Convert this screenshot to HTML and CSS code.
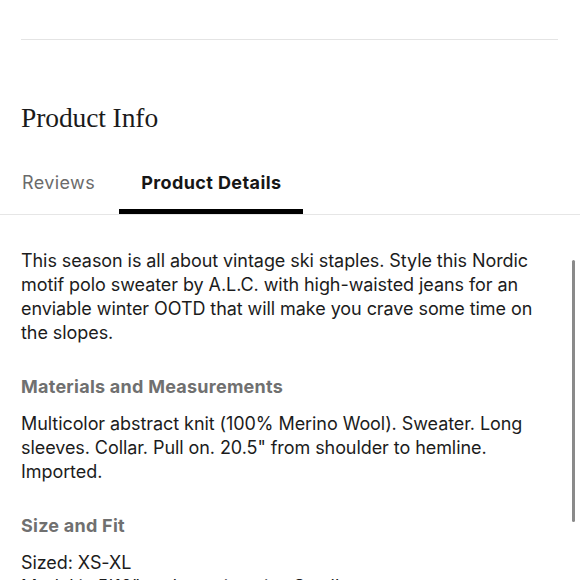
FILE: index.html
```html
<!DOCTYPE html>
<html lang="en">
<head>
<meta charset="utf-8">
<title>Product Info</title>
<link rel="stylesheet" href="styles.css">
</head>
<body>
<div class="page">
  <div class="top">
    <hr class="divider">
    <h1 class="title">Product Info</h1>
  </div>
  <nav class="tabs">
    <span class="tab">Reviews</span>
    <span class="tab active">Product Details</span>
  </nav>
  <section class="content">
    <p class="para">This season is all about vintage ski staples. Style this Nordic motif polo sweater by A.L.C. with high-waisted jeans for an enviable winter OOTD that will make you crave some time on the slopes.</p>
    <h2 class="subhead">Materials and Measurements</h2>
    <p class="para">Multicolor abstract knit (100% Merino Wool). Sweater. Long sleeves. Collar. Pull on. 20.5" from shoulder to hemline. Imported.</p>
    <h2 class="subhead">Size and Fit</h2>
    <p class="para">Sized: XS-XL<br>Model is 5'10" and wearing size Small.</p>
  </section>
  <div class="scrollbar"></div>
</div>
</body>
</html>
```

FILE: styles.css
```css
* { box-sizing: border-box; }

html, body {
  margin: 0;
  padding: 0;
  background: #ffffff;
}

body {
  font-family: Inter, "Noto Sans", "Liberation Sans", sans-serif;
  color: #1c1c1c;
  overflow: hidden;
}

.page {
  position: relative;
  width: 580px;
  height: 580px;
  overflow: hidden;
}

.top {
  padding: 39px 22px 0 21px;
}

.divider {
  margin: 0;
  border: 0;
  border-top: 1px solid #e4e4e4;
}

.title {
  margin: 62px 0 0 0;
  font-family: "Liberation Serif", "DejaVu Serif", serif;
  font-weight: 400;
  font-size: 27.5px;
  line-height: 31px;
  color: #1a1a1a;
  letter-spacing: -0.1px;
}

.tabs {
  display: flex;
  margin-top: 38px;
  border-bottom: 1px solid #e6e6e6;
}

.tab {
  padding: 0 22px 14px 22px;
  font-size: 18px;
  line-height: 24px;
  letter-spacing: 0.4px;
  color: #6b6b6b;
  border-bottom: 5px solid transparent;
}

.tab.active {
  margin-left: 2px;
  color: #161616;
  font-weight: 700;
  border-bottom-color: #000000;
}

.content {
  padding: 34px 30px 0 21px;
}

.para {
  margin: 0;
  font-size: 18px;
  line-height: 24px;
  letter-spacing: -0.07px;
  color: #1c1c1c;
}

.subhead {
  margin: 30px 0 13px 0;
  font-size: 18px;
  line-height: 24px;
  letter-spacing: 0.25px;
  font-weight: 700;
  color: #707070;
}

.scrollbar {
  position: absolute;
  left: 572px;
  top: 260px;
  width: 3px;
  height: 262px;
  border-radius: 2px;
  background: #8a8a8a;
}
```
